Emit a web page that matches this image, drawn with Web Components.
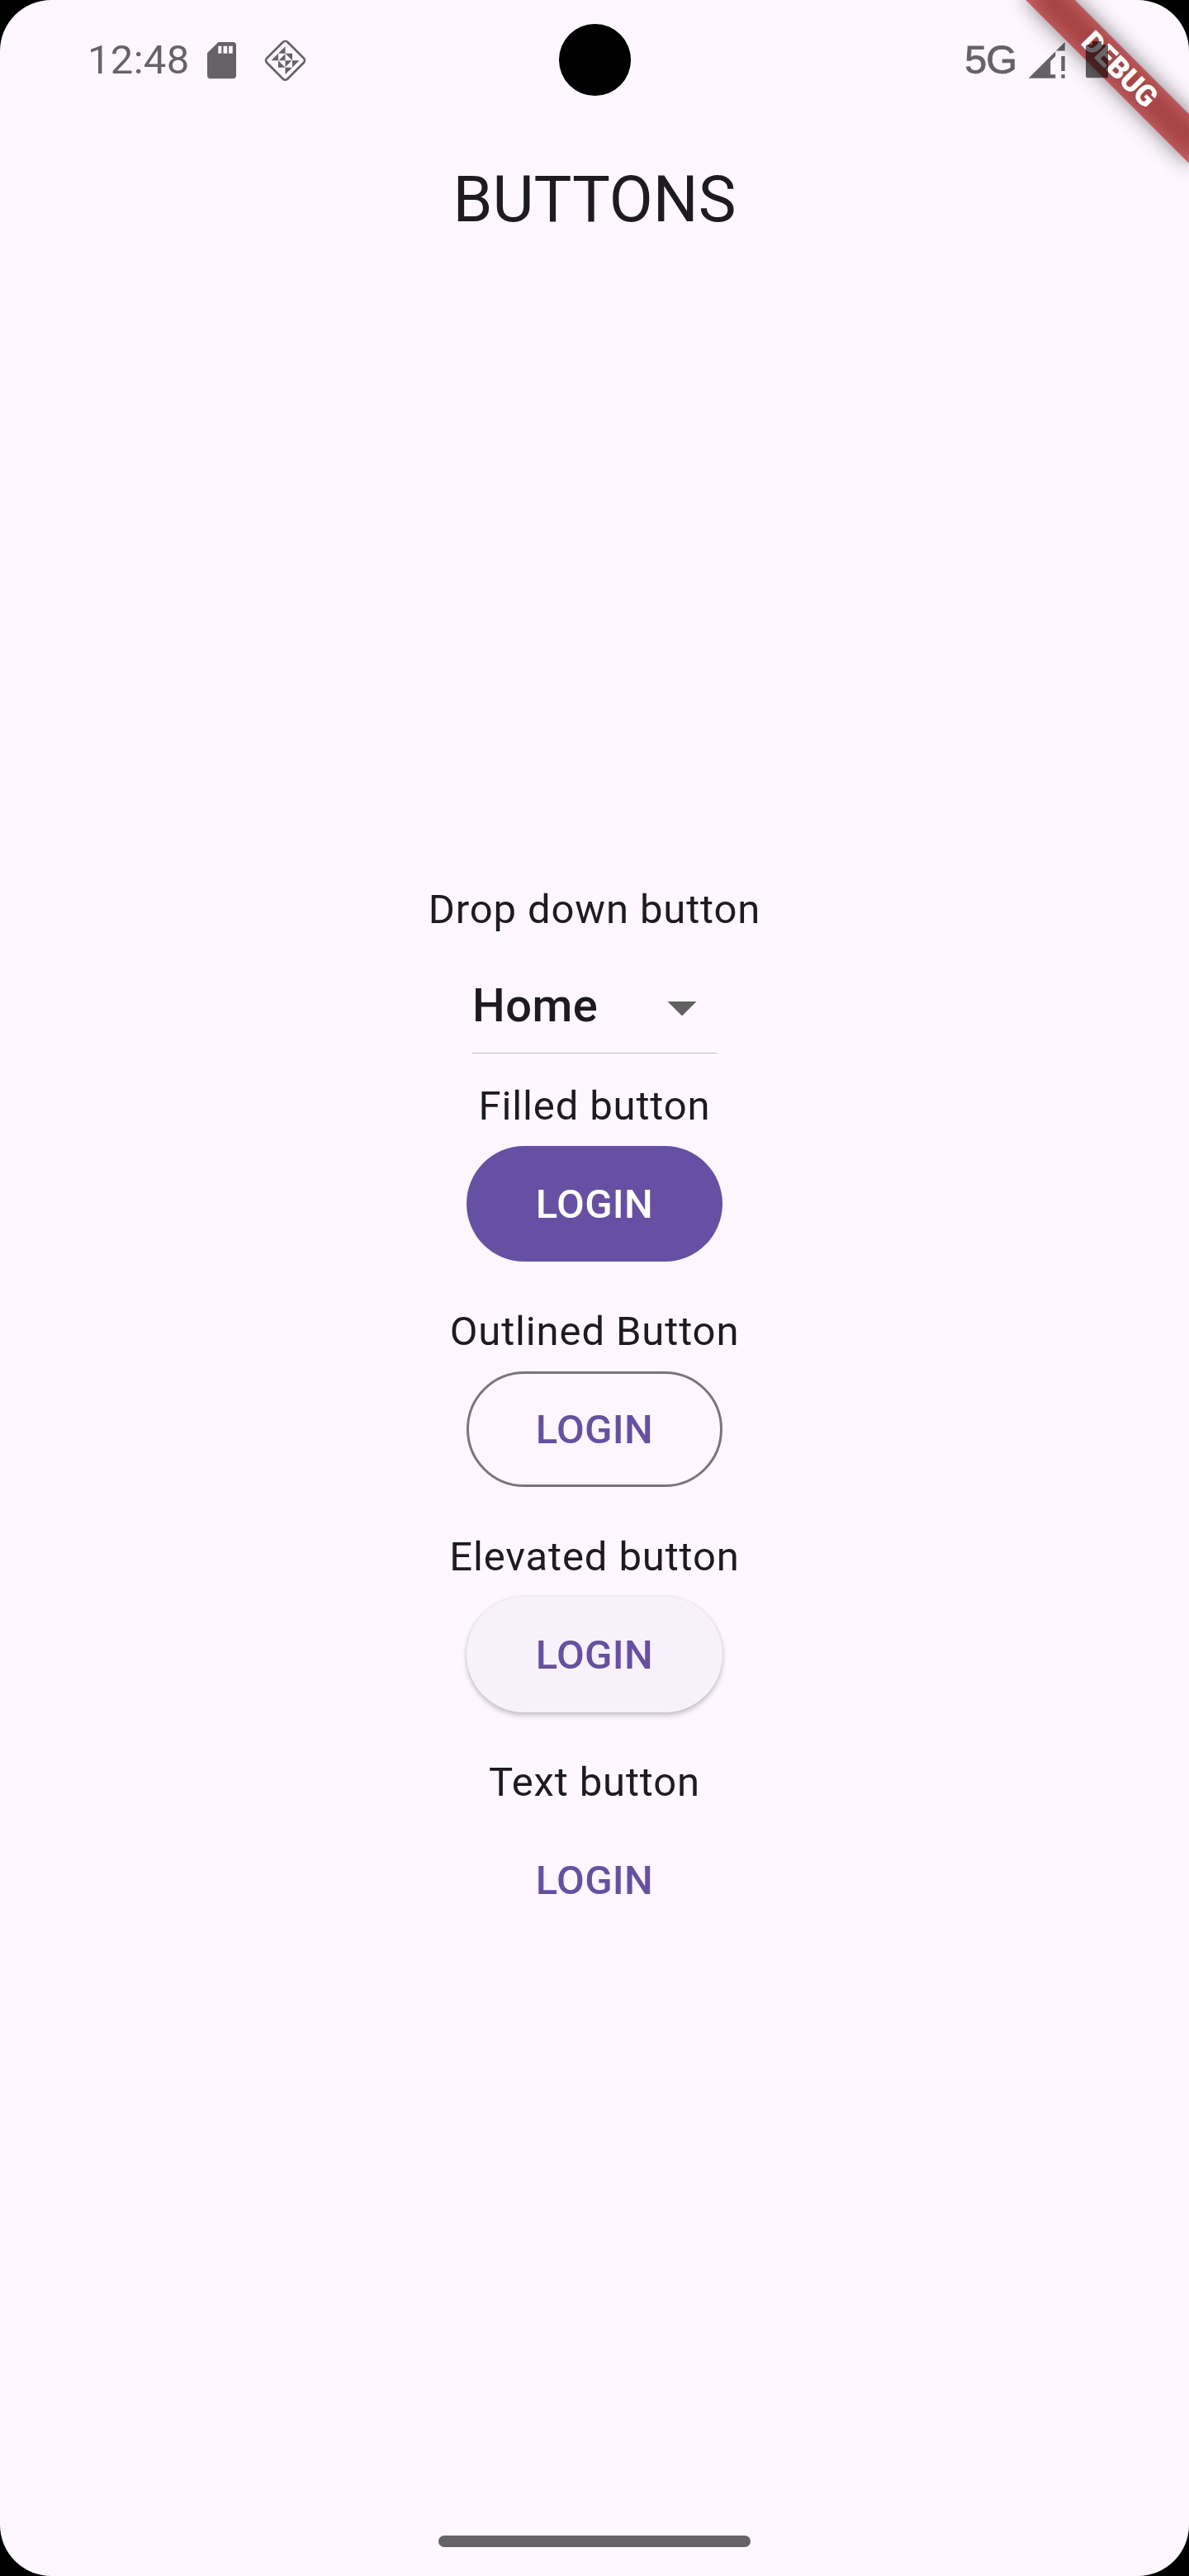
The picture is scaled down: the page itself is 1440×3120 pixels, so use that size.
<!DOCTYPE html>
<html lang="en">
<head>
<meta charset="utf-8">
<title>Buttons</title>
<style>
html, body { margin: 0; background: #000; }
body { width: 1440px; height: 3120px; overflow: hidden; font-family: Roboto, sans-serif; color: #1d1b20; }
</style>
</head>
<body>
<phone-screen>
  <status-bar slot="status" time="12:48" network="5G"></status-bar>
  <app-bar slot="bar">BUTTONS</app-bar>
  <button-section flush label="Drop down button"><drop-down>Home</drop-down></button-section>
  <button-section label="Filled button"><md-button variant="filled">LOGIN</md-button></button-section>
  <button-section label="Outlined Button"><md-button variant="outlined">LOGIN</md-button></button-section>
  <button-section label="Elevated button"><md-button variant="elevated">LOGIN</md-button></button-section>
  <button-section label="Text button"><md-button variant="text">LOGIN</md-button></button-section>
  <debug-banner slot="banner">DEBUG</debug-banner>
</phone-screen>
<script>
const define = (name, html, init) => customElements.define(name, class extends HTMLElement {
  constructor() {
    super();
    this.attachShadow({ mode: 'open' }).innerHTML = html;
  }
  connectedCallback() { if (init) init(this, this.shadowRoot); }
});

define('phone-screen', `
<style>
:host { display: flex; flex-direction: column; position: relative; width: 1440px; height: 3120px; background: #fef7ff; border-radius: 62px; overflow: hidden; }
main { flex: 1; display: flex; flex-direction: column; align-items: center; padding-top: 726px; }
footer { height: 49px; display: flex; justify-content: center; align-items: flex-start; }
footer i { width: 378px; height: 14px; border-radius: 7px; background: rgba(0,0,0,.6); }
.camera { position: absolute; left: 677px; top: 29px; width: 86.6px; height: 86.6px; border-radius: 50%; background: #000; }
</style>
<slot name="status"></slot>
<slot name="bar"></slot>
<main><slot></slot></main>
<footer><i></i></footer>
<slot name="banner"></slot>
<div class="camera"></div>`);

define('status-bar', `
<style>
:host { display: flex; justify-content: space-between; height: 144px; box-sizing: border-box; padding: 43px 97px 0 106px; opacity: .6; color: #000; position: relative; z-index: 2; }
div { display: flex; align-items: flex-start; height: 60px; }
span { font-size: 49px; line-height: 59px; white-space: nowrap; }
.time { width: 145px; letter-spacing: .3px; }
.net { font-family: "Liberation Sans", sans-serif; font-size: 48.5px; line-height: 59px; letter-spacing: -1px; -webkit-text-stroke: .9px #000; }
svg { display: block; flex: none; }
.sd { margin-right: 34px; }
.sig { margin-left: 14px; margin-right: 25px; }
</style>
<div>
  <span class="time"></span>
  <svg class="sd" width="35" height="60" viewBox="251 43 35 60"><path fill-rule="evenodd" d="M264.500 51H282a4 4 0 0 1 4 4v36.300a4 4 0 0 1-4 4H255a4 4 0 0 1-4-4V64.200zM264.300 55.700v9h4v-9zM270.500 55.700v9h4.700v-9zM277 55.700v9h4.700v-9z"/></svg>
  <svg width="52" height="60" viewBox="320 43 52 60"><rect x="327.750" y="55.450" width="35.500" height="35.500" rx="4" transform="rotate(45 345.500 73.200)" fill="none" stroke="#000" stroke-width="2.700"/>
    <g transform="translate(345.500 73.200)"><path d="M0-17V-8.500H-8.500zM-17 0L-8.500-8.500V0zM0-8.500H8.500V0zM0-8V0H-8zM-8.500 0V8.500H0zM0 0H8L0 8zM8.500 0H17L8.500 8.500zM0 8.500H8.500L0 17z"/></g></svg>
</div>
<div>
  <span class="net"></span>
  <svg class="sig" width="45" height="60" viewBox="1245 43 45 60"><path d="M1289.700 51v10.600H1279zM1245.700 94.700L1278.300 62.300V68L1272.300 74V90.300H1278.300V94.700zM1285.300 68h4.400v18h-4.400zM1285.300 90.300h4.400v4.400h-4.400z"/></svg>
  <svg width="28" height="60" viewBox="1315 43 28 60"><path d="M1323 50h11v4.300h6a2 2 0 0 1 2 2V92.300a2 2 0 0 1-2 2H1317a2 2 0 0 1-2-2V56.300a2 2 0 0 1 2-2h6z"/></svg>
</div>`, (el, root) => {
  root.querySelector('.time').textContent = el.getAttribute('time');
  root.querySelector('.net').textContent = el.getAttribute('network');
});

define('app-bar', `
<style>
:host { display: flex; align-items: center; justify-content: center; height: 196px; font-size: 77px; line-height: 98px; }
</style>
<slot></slot>`);

define('button-section', `
<style>
:host { display: flex; flex-direction: column; align-items: center; margin-bottom: 35px; }
:host([flush]) { margin-bottom: 0; }
.label { height: 70px; font-size: 49px; line-height: 71px; letter-spacing: .875px; white-space: nowrap; }
</style>
<div class="label"></div>
<slot></slot>`, (el, root) => {
  root.querySelector('.label').textContent = el.getAttribute('label');
});

define('drop-down', `
<style>
:host { display: block; width: 296px; height: 168px; }
.row { display: flex; align-items: center; justify-content: space-between; height: 140px; box-sizing: border-box; padding-top: 29px; border-bottom: 1px solid #bdbdbd; }
span { font-size: 56px; line-height: 84px; font-weight: 500; letter-spacing: .525px; padding-bottom: 4px; }
svg { fill: #616161; }
</style>
<div class="row"><span><slot></slot></span><svg width="84" height="84" viewBox="0 0 24 24"><path d="M7 10l5 5 5-5z"/></svg></div>`);

define('md-button', `
<style>
:host { display: flex; align-items: center; height: 168px; }
button { all: unset; box-sizing: border-box; display: flex; align-items: center; justify-content: center; width: 310px; height: 140px; padding-top: 2px; border-radius: 70px; font-size: 49px; line-height: 70px; font-weight: 500; letter-spacing: .35px; color: #6750a4; }
:host([variant=filled]) button { background: #6750a4; color: #fff; }
:host([variant=outlined]) button { border: 3px solid #79747e; }
:host([variant=elevated]) button { background: #f7f2fa; box-shadow: 0 4px 6px rgba(0,0,0,.2), 0 0 5px rgba(0,0,0,.1); }
</style>
<button><slot></slot></button>`);

define('debug-banner', `
<style>
:host { position: absolute; left: 1216.300px; top: 62.700px; width: 280px; height: 42px; transform: rotate(45deg); z-index: 1; }
.shadow { position: absolute; inset: 0; background: rgba(0,0,0,.498); filter: blur(12.600px); }
.band { position: absolute; inset: 0; background: rgba(183,28,28,.627); color: #fff; font-size: 35.700px; line-height: 43px; font-weight: 900; letter-spacing: -.3px; text-align: center; }
</style>
<div class="shadow"></div><div class="band"><slot></slot></div>`);
</script>
</body>
</html>
